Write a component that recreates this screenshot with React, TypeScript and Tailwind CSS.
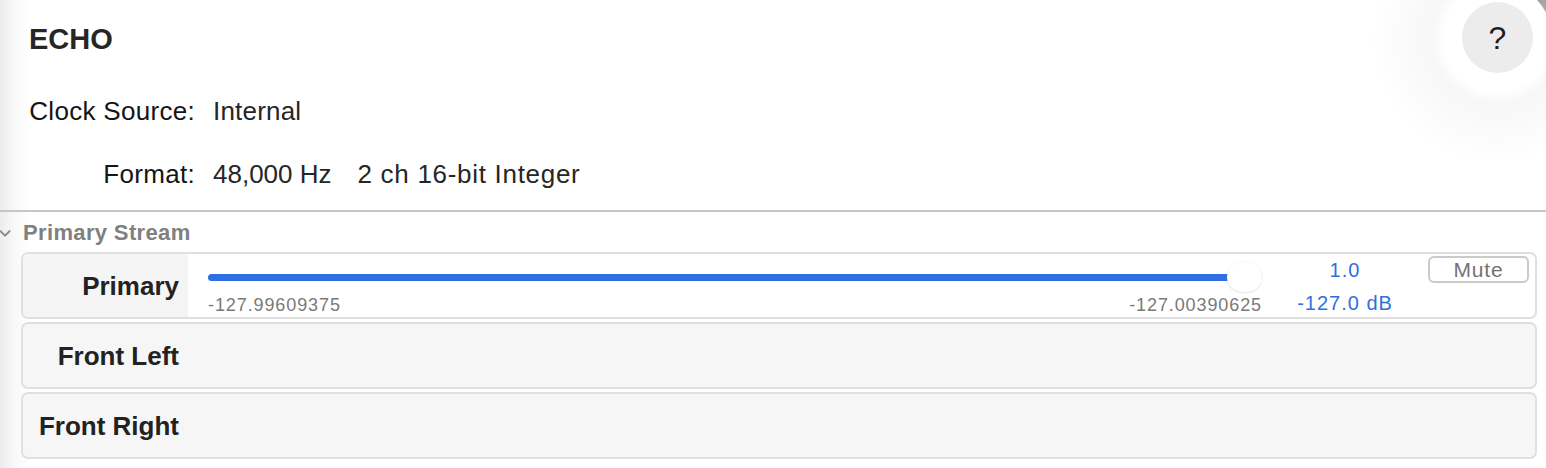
import React from "react";

function Chevron() {
  return (
    <svg width="12" height="9" viewBox="0 0 12 9" className="block">
      <path d="M1.5 2.2 L6 6.6 L10.5 2.2" fill="none" stroke="#8a8a8a" strokeWidth="2" strokeLinecap="round" strokeLinejoin="round" />
    </svg>
  );
}

function PlainCard({ label }: { label: string }) {
  return (
    <div className="h-[67px] rounded-[7px] border-2 border-[#e0e0e0] bg-[#f6f6f6] flex items-center">
      <div className="w-[165px] pr-[9px] text-right text-[26px] leading-[32px] font-bold text-[#222]">{label}</div>
    </div>
  );
}

export default function App() {
  return (
    <div
      className="relative w-[1546px] h-[468px] overflow-hidden bg-[linear-gradient(to_right,#ececec_0px,#f8f8f8_14px,#ffffff_30px)] text-[#1d1d1d]"
      style={{ fontFamily: '"Liberation Sans", Arial, sans-serif' }}
    >
      {/* top-right corner decoration */}
      <div className="absolute left-[1370px] top-[-90px] w-[255px] h-[255px] rounded-full bg-[radial-gradient(circle_closest-side,rgba(0,0,0,0)_0%,rgba(0,0,0,0)_42%,rgba(0,0,0,0.03)_52%,rgba(0,0,0,0)_100%)]" />
      <div className="absolute top-0 right-0 w-[22px] h-[26px] bg-[linear-gradient(to_bottom,#a3a3a3,#b8b8b8)]" />
      <div className="absolute left-[1443px] top-[-17px] w-[109px] h-[109px] rounded-full bg-white" />
      <div className="absolute left-[1462px] top-[2px] w-[71px] h-[71px] rounded-full bg-[#ececec] flex items-center justify-center text-[32px] leading-none text-[#1e1e1e]">
        ?
      </div>

      {/* header */}
      <div className="pl-[29px] pt-[25px]">
        <div className="h-[29px] text-[29px] leading-[29px] font-bold text-[#262626]">ECHO</div>
      </div>
      <div className="mt-[41px] flex flex-col gap-[31px]">
        <div className="flex h-[32px] text-[26px] leading-[32px]">
          <div className="w-[195px] text-right text-[#151515] tracking-[0.3px]">Clock Source:</div>
          <div className="pl-[18px] text-[#262626] tracking-[0.2px]">Internal</div>
        </div>
        <div className="flex h-[32px] text-[26px] leading-[32px]">
          <div className="w-[195px] text-right text-[#151515] tracking-[0.3px]">Format:</div>
          <div className="pl-[18px] text-[#262626] flex">
            <span>48,000 Hz</span>
            <span className="ml-[26px] tracking-[0.7px]">2 ch 16-bit Integer</span>
          </div>
        </div>
      </div>

      {/* separator */}
      <div className="mt-[20px] h-[2px] bg-[#c6c6c6]" />

      {/* section header */}
      <div className="mt-[8px] flex items-center h-[26px]">
        <div className="w-[23px] -ml-[1px] flex items-center">
          <Chevron />
        </div>
        <div className="ml-[1px] text-[22px] leading-[26px] font-bold tracking-[0.35px] text-[#808080]">Primary Stream</div>
      </div>

      {/* cards */}
      <div className="mt-[6px] ml-[21px] w-[1516px] flex flex-col gap-[3px]">
        <div className="h-[67px] rounded-[7px] border-2 border-[#e0e0e0] bg-white flex overflow-hidden">
          <div className="w-[165px] bg-[#f5f5f5] pr-[9px] flex items-center justify-end">
            <div className="text-[26px] leading-[32px] font-bold text-[#222]">Primary</div>
          </div>
          <div className="flex-1 flex">
            {/* slider */}
            <div className="pl-[20px] pt-[8px] w-[1074px] flex flex-col">
              <div className="relative h-[30px]">
                <div className="absolute left-0 right-[16px] top-[12px] h-[7px] rounded-full bg-[#2f6fe3]" />
                <div className="absolute right-0 top-0 w-[35px] h-[30px] rounded-full bg-white shadow-[0_0.5px_2px_rgba(0,0,0,0.16)]" />
              </div>
              <div className="mt-[3px] h-[20px] flex justify-between text-[18px] leading-[20px] tracking-[0.9px] text-[#7a7a7a]">
                <span>-127.99609375</span>
                <span>-127.00390625</span>
              </div>
            </div>
            {/* values */}
            <div className="w-[166px] pt-[4px] flex flex-col items-center text-[20px] leading-[24px] tracking-[1px] text-[#2f6fe0]">
              <div className="h-[24px]">1.0</div>
              <div className="mt-[9px] h-[24px]">-127.0 dB</div>
            </div>
            {/* mute */}
            <div className="pt-[2px]">
              <div className="w-[101px] h-[27px] rounded-[6px] border-2 border-[#cacaca] bg-white flex items-center justify-center text-[21px] leading-none tracking-[0.8px] text-[#737373]">
                Mute
              </div>
            </div>
          </div>
        </div>
        <PlainCard label="Front Left" />
        <PlainCard label="Front Right" />
      </div>
    </div>
  );
}
